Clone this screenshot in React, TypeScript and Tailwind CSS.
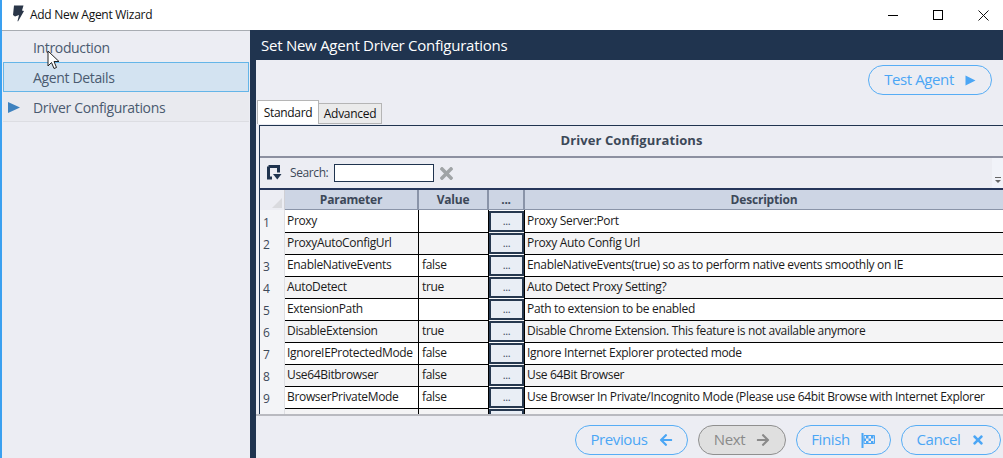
import { FaArrowLeft, FaArrowRight, FaTimes } from "react-icons/fa";

const rows = [
  { name: "Proxy", value: "", desc: "Proxy Server:Port" },
  { name: "ProxyAutoConfigUrl", value: "", desc: "Proxy Auto Config Url" },
  { name: "EnableNativeEvents", value: "false", desc: "EnableNativeEvents(true) so as to perform native events smoothly on IE" },
  { name: "AutoDetect", value: "true", desc: "Auto Detect Proxy Setting?" },
  { name: "ExtensionPath", value: "", desc: "Path to extension to be enabled" },
  { name: "DisableExtension", value: "true", desc: "Disable Chrome Extension. This feature is not available anymore" },
  { name: "IgnoreIEProtectedMode", value: "false", desc: "Ignore Internet Explorer protected mode" },
  { name: "Use64Bitbrowser", value: "false", desc: "Use 64Bit Browser" },
  { name: "BrowserPrivateMode", value: "false", desc: "Use Browser In Private/Incognito Mode (Please use 64bit Browse with Internet Explorer" },
  { name: "", value: "", desc: "" },
];

const PillButton = ({ text, icon, width, disabled }: { text: string; icon: React.ReactNode; width: string; disabled?: boolean }) => (
  <div
    className={`${width} h-[30px] rounded-[15px] border flex items-center justify-center gap-[11px] text-[15px] tracking-[-0.4px] ${
      disabled ? "border-[#8f8f8f] bg-[#dfdfdf] text-[#8a8a8a]" : "border-[#57adf5] text-[#4ba6f5]"
    }`}
  >
    <span className="mt-[-1px]">{text}</span>
    {icon}
  </div>
);

const App = () => {
  return (
    <div
      className="relative w-[1003px] h-[458px] overflow-hidden bg-white border-l-2 border-[#3aa0f0] text-[#111] flex flex-col"
      style={{ fontFamily: '"Open Sans", "Noto Sans", sans-serif' }}
    >
      {/* title bar */}
      <div className="h-[30px] shrink-0 flex items-center bg-white">
        <svg width="12" height="17" viewBox="0 0 12 17" className="ml-[10px] mb-[3px]">
          <path d="M2 0.5h9.5l-1.5 5 2 0.5-6 10.5-0.5-0.5 1.5-6-4 1.5-2-1.5z" fill="#2a3648" />
        </svg>
        <span className="ml-[6px] text-[12px] tracking-[-0.28px] text-[#111]">Add New Agent Wizard</span>
        <div className="ml-auto flex items-center">
          <div className="w-[10px] h-px bg-black mr-[35px]" />
          <div className="w-[10px] h-[10px] border border-black mr-[35px]" />
          <svg width="11" height="11" viewBox="0 0 11 11" className="mr-[14px]">
            <path d="M0.5 0.5l10 10M10.5 0.5l-10 10" stroke="#111" fill="none" />
          </svg>
        </div>
      </div>

      <div className="flex flex-1 min-h-0">
        {/* left nav */}
        <div className="w-[248px] shrink-0 bg-[#ecedf3] border-t border-[#a8acb2] flex flex-col text-[14px] tracking-[-0.35px] text-[#4a5a70]">
          <div className="h-[31px] pl-[31px] pt-[2px] flex items-center">Introduction</div>
          <div className="h-[30px] ml-px mr-px pl-[29px] flex items-center bg-[#d3e3f1] border border-[#64b5e8]">Agent Details</div>
          <div className="h-[30px] ml-px mr-px pt-px flex items-center border-b border-[#dcdde2] bg-[#e9eaef]">
            <svg width="12" height="11" viewBox="0 0 12 11" className="ml-[5px] mr-[13px]">
              <path d="M0 0l12 5.5-12 5.5z" fill="#3f82bf" />
            </svg>
            Driver Configurations
          </div>
        </div>

        {/* main */}
        <div className="flex-1 min-w-0 flex flex-col bg-[#ecedf3] border-l-[6px] border-[#20344f]">
          <div className="h-[30px] shrink-0 -ml-[6px] pl-[11px] pt-px bg-[#20344f] text-white text-[15px] tracking-[-0.25px] flex items-center">
            Set New Agent Driver Configurations
          </div>

          <div className="h-[35px] shrink-0 flex items-end justify-end pr-[11px]">
            <PillButton
              text="Test Agent"
              width="w-[124px]"
              icon={
                <svg width="11" height="11" viewBox="0 0 11 11">
                  <path d="M0.5 0.5l10 5-10 5z" fill="#4ba6f5" />
                </svg>
              }
            />
          </div>

          {/* tabs */}
          <div className="h-[24px] pt-[5px] box-content shrink-0 flex items-end text-[12px] tracking-[-0.3px]">
            <div className="h-[24px] w-[62px] ml-px bg-white border border-b-0 border-[#b5b5b5] flex items-center justify-center relative z-10">Standard</div>
            <div className="h-[21px] w-[63px] bg-[#ebebeb] border border-l-0 border-[#b5b5b5] flex items-center justify-center">Advanced</div>
          </div>

          {/* table panel */}
          <div className="h-[289px] shrink-0 mt-px ml-[3px] border-t border-l border-[#20344f] overflow-hidden flex flex-col bg-[#ecedf3]">
            <div className="h-[32px] shrink-0 flex items-center justify-center border-b-2 border-[#8c90a0] text-[13px] font-bold tracking-[0.1px] text-[#3c4858]">
              Driver Configurations
            </div>
            <div className="h-[32px] shrink-0 relative flex items-center border-b-2 border-[#26365a] text-[12px] tracking-[-0.4px] text-[#3c4858]">
              <svg width="15" height="16" viewBox="0 0 15 16" className="ml-[7px]">
                <path d="M1.5 1.5h10v6M5 13H1.5V1.5" stroke="#20344f" strokeWidth="3" fill="none" />
                <path d="M6 9h8.5l-4.2 5.5z" fill="#20344f" />
              </svg>
              <span className="ml-[8px]">Search:</span>
              <div className="ml-[6px] w-[100px] h-[18px] bg-white border border-[#20344f]" />
              <FaTimes className="ml-[3px] text-[#a0a4a6]" size={19} />
              <div className="absolute right-0 top-0 bottom-0 w-[11px] flex flex-col items-center justify-end pb-[5px] bg-[#f1f3f9]">
                <div className="w-[6px] h-px bg-[#666] mb-[2px]" />
                <div className="w-0 h-0 border-x-[3px] border-x-transparent border-t-[3px] border-t-[#666]" />
              </div>
            </div>

            {/* grid header */}
            <div className="h-[20px] shrink-0 flex text-[12px] font-bold tracking-[-0.2px] text-[#3c4858]">
              <div className="w-[25px] shrink-0 relative border-r border-[#d0d0d5]">
                <div className="absolute right-[2px] bottom-[2px] w-0 h-0 border-l-[10px] border-l-transparent border-b-[10px] border-b-[#d9dade]" />
              </div>
              <div className="w-[134px] shrink-0 bg-[#cdd5e4] border-r-2 border-b border-[#8a94a8] flex items-center justify-center">Parameter</div>
              <div className="w-[70px] shrink-0 bg-[#cdd5e4] border-r-2 border-b border-[#8a94a8] flex items-center justify-center">Value</div>
              <div className="w-[36px] shrink-0 bg-[#cdd5e4] border-r-2 border-b border-[#8a94a8] flex items-center justify-center">...</div>
              <div className="flex-1 bg-[#cdd5e4] border-b border-[#8a94a8] flex items-center justify-center">Description</div>
            </div>

            {/* grid rows */}
            {rows.map((row, i) => (
              <div key={i} className={`h-[22px] shrink-0 flex text-[12px] tracking-[-0.33px] text-[#1a1a1a] ${i % 2 === 0 ? "bg-white" : "bg-[#f4f4f5]"}`}>
                <div className="w-[25px] shrink-0 bg-[#f3f4f7] border-r border-[#dedfe3] pl-[3px] pt-[4px] text-[#3c4858]">{i < 9 ? i + 1 : ""}</div>
                <div className={`w-[134px] shrink-0 border-r border-black pl-[2px] leading-[18px] ${i > 0 ? "border-t pt-px" : "pt-[2px]"}`}>{row.name}</div>
                <div className={`w-[70px] shrink-0 border-r border-black pl-[3px] leading-[18px] ${i > 0 ? "border-t pt-px" : "pt-[2px]"}`}>{row.value}</div>
                <div className="w-[36px] shrink-0 border-r border-black flex">
                  <div className="w-[35px] h-[21px] mt-px bg-[#e9eef5] border-2 border-[#26384f] flex items-center justify-center text-[11px] text-[#3c4858]">{i < 9 ? "..." : ""}</div>
                </div>
                <div className={`flex-1 border-black pl-[2px] leading-[18px] whitespace-nowrap overflow-hidden ${i > 0 ? "border-t pt-px" : "pt-[2px]"}`}>{row.desc}</div>
              </div>
            ))}
          </div>

          {/* footer */}
          <div className="flex-1 border-t-2 border-[#b9bac0] flex items-start justify-end gap-[10px] pt-[9px] pr-[2px]">
            <PillButton text="Previous" width="w-[113px]" icon={<FaArrowLeft size={14} />} />
            <PillButton text="Next" width="w-[88px]" disabled icon={<FaArrowRight size={14} />} />
            <PillButton
              text="Finish"
              width="w-[95px]"
              icon={
                <svg width="15" height="15" viewBox="0 0 15 15">
                  <path d="M1.5 0v15" stroke="#4ba6f5" strokeWidth="2" />
                  <path d="M3 2.5h10.5v8H3z" fill="none" stroke="#4ba6f5" />
                  <path d="M5 3h2.5v2.5H5zM10 3h2.5v2.5H10zM7.5 5.5H10V8H7.5zM3 5.5h2V8H3zM5 8h2.5v2H5zM10 8h2.5v2H10z" fill="#4ba6f5" />
                </svg>
              }
            />
            <PillButton text="Cancel" width="w-[100px]" icon={<FaTimes size={14} />} />
          </div>
        </div>
      </div>

      {/* mouse pointer */}
      <svg width="14" height="22" viewBox="0 0 14 22" className="absolute left-[45px] top-[50px]">
        <path d="M1 1v15l3.5-3.5 2.5 6 2.5-1-2.5-6h5z" fill="#fff" stroke="#222" strokeWidth="1" />
      </svg>
    </div>
  );
};

export default App;
